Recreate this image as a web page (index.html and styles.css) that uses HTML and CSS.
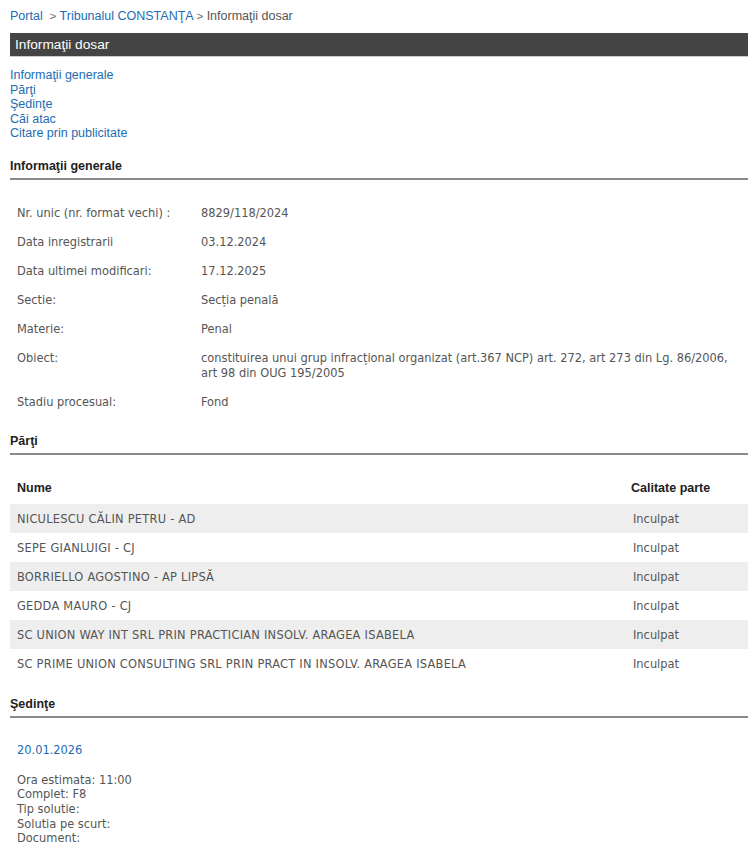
FILE: index.html
```html
<!DOCTYPE html>
<html lang="ro">
<head>
<meta charset="utf-8">
<title>Informaţii dosar</title>
<link rel="stylesheet" href="styles.css">
</head>
<body>
<div class="crumbs"><a href="#">Portal</a>&nbsp; <span class="sep">&gt;</span> <a href="#">Tribunalul CONSTANŢA</a> <span class="sep">&gt;</span> <span class="cur">Informaţii dosar</span></div>
<div class="titlebar">Informaţii dosar</div>
<nav class="toc">
  <a href="#gen">Informaţii generale</a>
  <a href="#parti">Părţi</a>
  <a href="#sed">Şedinţe</a>
  <a href="#cai">Căi atac</a>
  <a href="#cit">Citare prin publicitate</a>
</nav>

<h2 class="section" id="gen">Informaţii generale</h2>
<table class="info">
  <tr><td class="lbl">Nr. unic (nr. format vechi) :</td><td>8829/118/2024</td></tr>
  <tr><td class="lbl">Data inregistrarii</td><td>03.12.2024</td></tr>
  <tr><td class="lbl">Data ultimei modificari:</td><td>17.12.2025</td></tr>
  <tr><td class="lbl">Sectie:</td><td>Secția penală</td></tr>
  <tr><td class="lbl">Materie:</td><td>Penal</td></tr>
  <tr><td class="lbl">Obiect:</td><td>constituirea unui grup infracțional organizat (art.367 NCP) art. 272, art 273 din Lg. 86/2006, art 98 din OUG 195/2005</td></tr>
  <tr><td class="lbl">Stadiu procesual:</td><td>Fond</td></tr>
</table>

<h2 class="section" id="parti">Părţi</h2>
<table class="parti">
  <thead><tr><th>Nume</th><th class="cal">Calitate parte</th></tr></thead>
  <tbody>
    <tr class="odd"><td class="name">NICULESCU CĂLIN PETRU - AD</td><td class="cal">Inculpat</td></tr>
    <tr><td class="name">SEPE GIANLUIGI - CJ</td><td class="cal">Inculpat</td></tr>
    <tr class="odd"><td class="name">BORRIELLO AGOSTINO - AP LIPSĂ</td><td class="cal">Inculpat</td></tr>
    <tr><td class="name">GEDDA MAURO - CJ</td><td class="cal">Inculpat</td></tr>
    <tr class="odd"><td class="name">SC UNION WAY INT SRL PRIN PRACTICIAN INSOLV. ARAGEA ISABELA</td><td class="cal">Inculpat</td></tr>
    <tr><td class="name">SC PRIME UNION CONSULTING SRL PRIN PRACT IN INSOLV. ARAGEA ISABELA</td><td class="cal">Inculpat</td></tr>
  </tbody>
</table>

<h2 class="section" id="sed">Şedinţe</h2>
<div class="sedinta">
  <div class="date">20.01.2026</div>
  <div class="details">
    <div>Ora estimata: 11:00</div>
    <div>Complet: F8</div>
    <div>Tip solutie:</div>
    <div>Solutia pe scurt:</div>
    <div>Document:</div>
  </div>
</div>
</body>
</html>
```

FILE: styles.css
```css
html, body {
  margin: 0;
  background: #fff;
}
body {
  padding: 8px 1px 0 10px;
  font-family: "Liberation Sans", Arial, sans-serif;
  font-size: 12.5px;
  color: #333;
}
a {
  color: #1c6db3;
  text-decoration: none;
}
.crumbs {
  line-height: 16px;
  color: #555;
}
.crumbs .sep {
  color: #666;
  font-size: 11.5px;
}
.titlebar {
  margin-top: 9px;
  height: 24px;
  line-height: 23px;
  background: #444;
  color: #fff;
  font-size: 13.7px;
  padding-left: 5px;
  border-bottom: 1px solid #ccc;
  box-sizing: border-box;
}
.toc {
  margin-top: 11px;
  display: flex;
  flex-direction: column;
  line-height: 14.5px;
}
.section {
  margin: 18px 0 0 0;
  font-size: 12.5px;
  font-weight: bold;
  color: #222;
  line-height: 15px;
  padding-bottom: 4px;
  border-bottom: 2px solid #8a8a8a;
}
.info, .parti {
  width: 100%;
  border-collapse: collapse;
  font-family: "DejaVu Sans Condensed", "DejaVu Sans", sans-serif;
  font-size: 12.7px;
  color: #555;
}
.info {
  margin-top: 18px;
}
.parti {
  margin-top: 19px;
}
.info td {
  padding: 7px 7px;
  line-height: 15px;
  vertical-align: top;
}
.info td.lbl {
  width: 170px;
}
.info + .section {
  margin-top: 18px;
}
.parti th {
  font-family: "Liberation Sans", Arial, sans-serif;
  font-size: 12.5px;
  font-weight: bold;
  color: #222;
  text-align: left;
  padding: 7px 7px 8px;
  line-height: 15px;
}
.parti th.cal {
  padding-left: 5px;
}
.parti td {
  padding: 7px 7px;
  line-height: 15px;
}
.parti td.name {
  letter-spacing: 0.25px;
}
.parti .cal {
  width: 108px;
}
.parti tr.odd td {
  background: #eeeeee;
}
.parti + .section {
  margin-top: 19px;
}
.sedinta {
  padding: 24px 7px 0;
  font-family: "DejaVu Sans Condensed", "DejaVu Sans", sans-serif;
  font-size: 12.7px;
  color: #555;
}
.sedinta .date {
  color: #1c6db3;
  line-height: 15px;
}
.sedinta .details {
  margin-top: 16px;
  line-height: 14.7px;
}
```
